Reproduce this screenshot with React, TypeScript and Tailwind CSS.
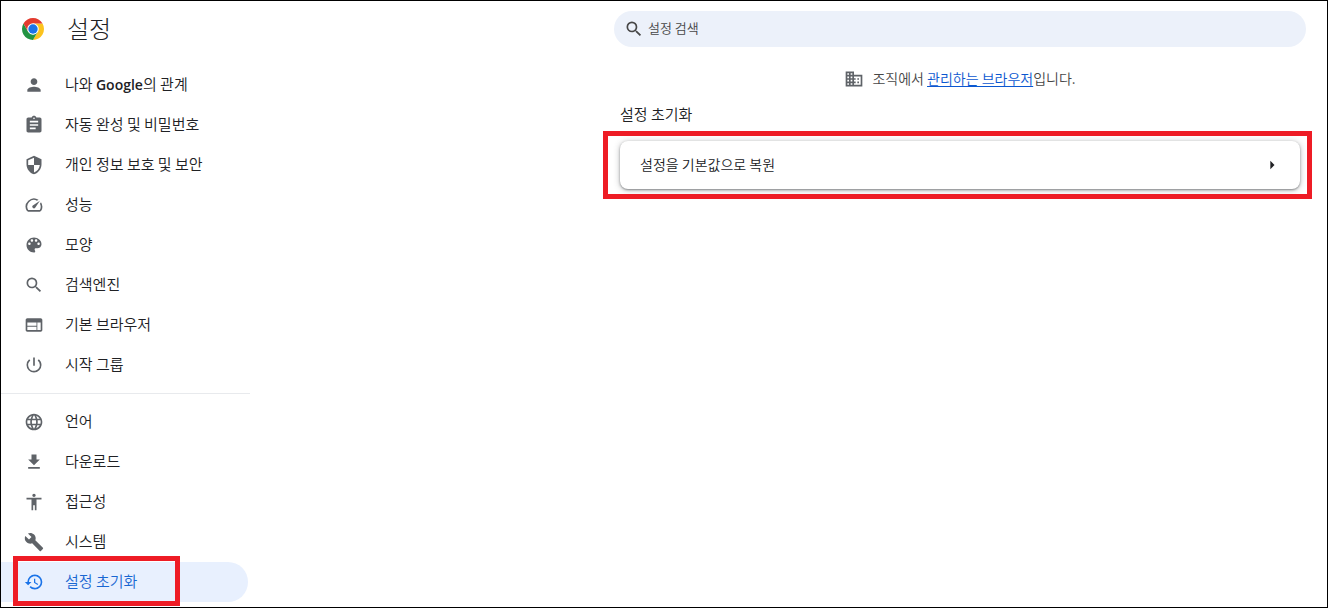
import type { ComponentType, ReactNode } from "react";
import {
  MdAccessibility,
  MdArrowRight,
  MdAssignment,
  MdBuild,
  MdDomain,
  MdFileDownload,
  MdLanguage,
  MdPerson,
  MdPowerSettingsNew,
  MdRestore,
  MdSearch,
  MdSecurity,
  MdSpeed,
  MdWeb,
} from "react-icons/md";

type Item = {
  label: ReactNode;
  icon: ComponentType<{ className?: string }>;
  active?: boolean;
};

function PaletteIcon({ className }: { className?: string }) {
  return (
    <svg viewBox="0 0 24 24" fill="currentColor" className={className} aria-hidden="true">
      <path d="M12 3c-4.97 0-9 4.03-9 9s4.03 9 9 9c.83 0 1.5-.67 1.5-1.5 0-.39-.15-.74-.39-1.01-.23-.26-.38-.61-.38-.99 0-.83.67-1.5 1.5-1.5H16c2.76 0 5-2.24 5-5 0-4.42-4.03-8-9-8zm-5.5 9c-.83 0-1.5-.67-1.5-1.5S5.67 9 6.5 9 8 9.67 8 10.5 7.33 12 6.5 12zm3-4C8.67 8 8 7.33 8 6.5S8.67 5 9.5 5s1.5.67 1.5 1.5S10.33 8 9.5 8zm5 0c-.83 0-1.5-.67-1.5-1.5S13.67 5 14.5 5s1.5.67 1.5 1.5S15.33 8 14.5 8zm3 4c-.83 0-1.5-.67-1.5-1.5S16.67 9 17.5 9s1.5.67 1.5 1.5-.67 1.5-1.5 1.5z" />
    </svg>
  );
}

const primary: Item[] = [
  {
    label: (
      <>
        나와 <span className="font-['Open_Sans'] text-sm leading-none font-semibold">Google</span>의 관계
      </>
    ),
    icon: MdPerson,
  },
  { label: "자동 완성 및 비밀번호", icon: MdAssignment },
  { label: "개인 정보 보호 및 보안", icon: MdSecurity },
  { label: "성능", icon: MdSpeed },
  { label: "모양", icon: PaletteIcon },
  { label: "검색엔진", icon: MdSearch },
  { label: "기본 브라우저", icon: MdWeb },
  { label: "시작 그룹", icon: MdPowerSettingsNew },
];

const secondary: Item[] = [
  { label: "언어", icon: MdLanguage },
  { label: "다운로드", icon: MdFileDownload },
  { label: "접근성", icon: MdAccessibility },
  { label: "시스템", icon: MdBuild },
  { label: "설정 초기화", icon: MdRestore, active: true },
];

function ChromeLogo() {
  return (
    <svg viewBox="0 0 48 48" className="size-6" aria-hidden="true">
      <path d="M24 13H43.05A22 22 0 0 1 24 46L33.53 29.5Z" fill="#fcc31e" />
      <path d="M4.95 13A22 22 0 0 0 24 46L33.53 29.5 24 35 14.47 29.5Z" fill="#229342" />
      <path d="M4.95 13 14.47 29.5 24 13H43.05A22 22 0 0 0 4.95 13Z" fill="#e33b2e" />
      <circle cx="24" cy="24" r="11.5" fill="#fff" />
      <circle cx="24" cy="24" r="9.4" fill="#1a73e8" />
    </svg>
  );
}

function NavList({ items }: { items: Item[] }) {
  return (
    <ul>
      {items.map(({ label, icon: Icon, active }, i) => (
        <li key={i} className="relative mr-0.5">
          <a
            href="#"
            aria-current={active ? "page" : undefined}
            className={
              active
                ? "flex h-10 items-center rounded-r-full bg-[#e8f0fe] pl-[23px] text-[#1967d2]"
                : "flex h-10 items-center pl-[23px] text-[#202124]"
            }
          >
            <Icon className={active ? "size-5 text-[#1a73e8]" : "size-5 text-[#5f6368]"} />
            <span className="ml-[21px] pb-0.5 text-[15px] leading-5">{label}</span>
          </a>
          {active && (
            <div className="pointer-events-none absolute -top-1.5 -bottom-1 left-3 w-[167px] border-5 border-[#ee1c25]" />
          )}
        </li>
      ))}
    </ul>
  );
}

export default function App() {
  return (
    <div className="flex min-h-screen border border-black bg-white font-['Noto_Sans_CJK_KR',sans-serif] font-[350] text-[#202124]">
      <aside className="w-[249px] shrink-0">
        <header className="mb-2 flex h-14 items-center pl-5">
          <ChromeLogo />
          <h1 className="ml-[22px] pb-0.5 text-2xl leading-8 font-light">설정</h1>
        </header>
        <nav aria-label="설정">
          <NavList items={primary} />
          <hr className="my-2 border-[#e8eaed]" />
          <NavList items={secondary} />
        </nav>
      </aside>

      <main className="mr-[21px] ml-auto max-w-[692px] flex-1 pt-2.5">
        <label className="flex h-9 items-center gap-1 rounded-full bg-[#ecf1fa] pl-2.5 text-[#474747]">
          <MdSearch className="size-5" />
          <input
            type="search"
            aria-label="설정 검색"
            placeholder="설정 검색"
            className="min-w-0 flex-1 bg-transparent pb-0.5 text-[13px] leading-5 outline-none placeholder:text-[#474747]"
          />
        </label>

        <p className="mt-[21px] flex items-center justify-center text-sm leading-5 text-[#474747]">
          <MdDomain className="mr-2 size-5 text-[#5f6368]" />
          <span className="pb-0.5">
            조직에서{" "}
            <a href="#" className="text-[#0b57d0] underline underline-offset-2">
              관리하는 브라우저
            </a>
            입니다.
          </span>
        </p>

        <section className="px-1.5 pt-3.5">
          <h2 className="text-[15px] leading-5">설정 초기화</h2>
          <div className="relative mt-[17px]">
            <button
              type="button"
              className="flex h-12 w-full items-center justify-between rounded-lg bg-white pr-[18px] pl-5 text-sm shadow-[0_1px_2px_rgba(60,64,67,0.5),0_1px_6px_rgba(60,64,67,0.35)]"
            >
              <span className="pb-0.5">설정을 기본값으로 복원</span>
              <MdArrowRight className="size-5" />
            </button>
            <div className="pointer-events-none absolute -top-2.5 -right-3 -bottom-2.5 -left-[17px] border-5 border-[#ee1c25]" />
          </div>
        </section>
      </main>
    </div>
  );
}
